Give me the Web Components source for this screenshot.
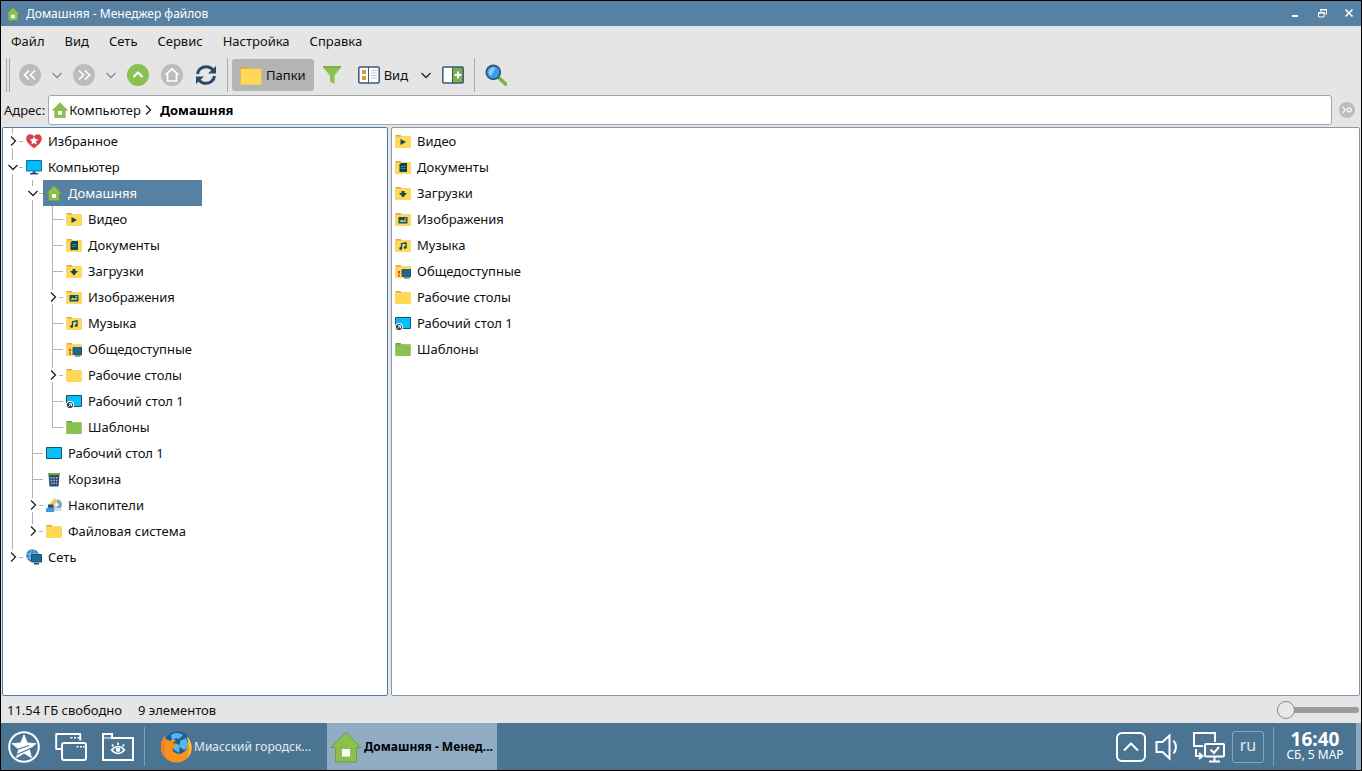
<!DOCTYPE html>
<html lang="ru">
<head>
<meta charset="utf-8">
<title>Домашняя - Менеджер файлов</title>
<style>
  html, body { margin: 0; height: 100%; background: #000; }
  body { font: 13px/20px "Noto Sans", "Open Sans", sans-serif; color: #101010; }
</style>
</head>
<body>
<desk-shell>
  <fm-titlebar icon="house">Домашняя - Менеджер файлов</fm-titlebar>
  <fm-menubar></fm-menubar>
  <fm-toolbar></fm-toolbar>
  <fm-address></fm-address>
  <fm-panes>
    <fm-tree slot="tree">
      <tree-item icon="heart" label="Избранное" state="closed"></tree-item>
      <tree-item icon="monitor" label="Компьютер" state="open">
        <tree-item icon="house" label="Домашняя" state="open" selected>
          <tree-item icon="f-video" label="Видео"></tree-item>
          <tree-item icon="f-docs" label="Документы"></tree-item>
          <tree-item icon="f-down" label="Загрузки"></tree-item>
          <tree-item icon="f-pics" label="Изображения" state="closed"></tree-item>
          <tree-item icon="f-music" label="Музыка"></tree-item>
          <tree-item icon="f-public" label="Общедоступные"></tree-item>
          <tree-item icon="folder" label="Рабочие столы" state="closed"></tree-item>
          <tree-item icon="desk-link" label="Рабочий стол 1"></tree-item>
          <tree-item icon="folder-green" label="Шаблоны"></tree-item>
        </tree-item>
        <tree-item icon="desk" label="Рабочий стол 1"></tree-item>
        <tree-item icon="trash" label="Корзина"></tree-item>
        <tree-item icon="drives" label="Накопители" state="closed"></tree-item>
        <tree-item icon="folder" label="Файловая система" state="closed"></tree-item>
      </tree-item>
      <tree-item icon="network" label="Сеть" state="closed"></tree-item>
    </fm-tree>
    <file-list slot="files">
      <file-entry icon="f-video">Видео</file-entry>
      <file-entry icon="f-docs">Документы</file-entry>
      <file-entry icon="f-down">Загрузки</file-entry>
      <file-entry icon="f-pics">Изображения</file-entry>
      <file-entry icon="f-music">Музыка</file-entry>
      <file-entry icon="f-public">Общедоступные</file-entry>
      <file-entry icon="folder">Рабочие столы</file-entry>
      <file-entry icon="desk-link">Рабочий стол 1</file-entry>
      <file-entry icon="folder-green">Шаблоны</file-entry>
    </file-list>
  </fm-panes>
  <fm-status><span>11.54 ГБ свободно</span><span>9 элементов</span></fm-status>
  <desk-taskbar slot="taskbar">
    <task-button icon="firefox">Миасский городск...</task-button>
    <task-button icon="house" active>Домашняя - Менед...</task-button>
  </desk-taskbar>
</desk-shell>

<script>
const FOLDER = '<path d="M0.5 2h5l1 1.500h9v11H0.500z" fill="#d9a93c"/><path d="M0.500 3.500h15V15H0.500z" fill="#ffd953"/>';
const HOUSE = '<path d="M16 1.500 1 16.500h4.500V31h21V16.500H31z" fill="#8bc04c" stroke="#6d9f3c"/><rect x="12" y="18" width="8" height="7.500" fill="#fff"/>';
const GREY = '<circle cx="11" cy="11" r="11" fill="#bcbcbc"/>';

/* name: [viewBox size, markup] */
const ICONS = {
  house: ['32 32', HOUSE],
  heart: ['16 16', '<path d="M8 15.200C4 12.500.2 9.500.2 5.500.2 2.800 2 1.200 4.200 1.200c1.600 0 3 .8 3.800 2 .8-1.200 2.200-2 3.800-2 2.200 0 4 1.600 4 4.300 0 4-3.800 7-7.800 9.700z" fill="#d9414f"/><path d="m8 3.500 1.300 2.600 2.900.4-2.100 2 .5 2.900L8 10l-2.600 1.400.5-2.900-2.100-2 2.900-.4z" fill="#fff"/>'],
  monitor: ['16 16', '<path d="M.5 1.500h15v10.500H.500z" fill="#00bfff" stroke="#166a94"/><path d="M6.500 12.500h3v2h-3z" fill="#1b5478"/><path d="M4 14h8v1.500H4z" fill="#1b5478"/>'],
  folder: ['16 16', FOLDER],
  'folder-green': ['16 16', '<path d="M.5 2h5l1 1.500h9v11H.5z" fill="#6d9f3c"/><path d="M.5 3.500h15V15H.5z" fill="#8bc152"/>'],
  'f-video': ['16 16', FOLDER + '<path d="M5.500 6v6l5.500-3z" fill="#0e4a50"/>'],
  'f-docs': ['16 16', FOLDER + '<path d="M6 4h6v9H4.500V5.500z" fill="#0e4453"/><path d="M6 7.500h4.500M6 9.500h4.500" stroke="#4f98ad" stroke-width=".8"/>'],
  'f-down': ['16 16', FOLDER + '<path d="M6.500 6h3v2H12l-4 4.500L4 8h2.500z" fill="#0e4a50"/>'],
  'f-pics': ['16 16', FOLDER + '<path d="M3.500 6h9v6.500h-9z" fill="#0e5560"/><path d="m4.500 11 2.200-2.500L8.200 10l1.700-1.500 1.700 2z" fill="#e8dc7a"/><circle cx="10.500" cy="7.500" r=".8" fill="#e8dc7a"/>'],
  'f-music': ['16 16', FOLDER + '<path d="M6.500 11.500V6.800l4.500-1v4.700" fill="none" stroke="#0e4a50" stroke-width="1.300"/><circle cx="5.700" cy="11.500" r="1.400" fill="#0e4a50"/><circle cx="10.200" cy="10.600" r="1.400" fill="#0e4a50"/>'],
  'f-public': ['16 16', FOLDER + '<circle cx="4" cy="9" r="1.200" fill="#d0442c"/><path d="M3 10.500h2V14H3z" fill="#e2782b"/><path d="M7 6.500h9v7H7z" fill="#1b6791" stroke="#164d70" stroke-width=".8"/><path d="M9 14.500h5.500v1H9z" fill="#234a60"/>'],
  desk: ['16 16', '<path d="M.5 2.500h15v11H.5z" fill="#00c2ff" stroke="#1d526f"/><path d="M3 4.500v3M5 4v1" stroke="#7f9c52" stroke-width="1.200"/>'],
  'desk-link': ['16 16', '<path d="M.5 2.500h15v11H.5z" fill="#00c2ff" stroke="#1d526f"/><path d="M3 4.500v1.500M5 4v1" stroke="#4f8a8c"/><circle cx="4" cy="12" r="4" fill="#fff"/><circle cx="4" cy="12" r="3.100" fill="#344550"/><path d="M2.500 13.700 5.200 11M3 10.700h2.500v2.500" stroke="#fff" fill="none"/>'],
  trash: ['16 16', '<path d="M2.500 3.500h11l-1 12h-9z" fill="#2f4d68"/><path d="M2 2h12v2H2z" fill="#7fa549"/><path d="M4.500 6h1.500v1.500H4.500zM7.300 6h1.500v1.500H7.300zM10 6h1.500v1.500H10zM4.700 8.700h1.500v1.500H4.700zM7.300 8.700h1.500v1.500H7.300zM9.900 8.700h1.500v1.500H9.900zM5 11.400h1.200v1.500H5zM7.300 11.400h1.500v1.500H7.300zM9.800 11.400H11v1.500H9.800z" fill="#a9c0d2"/>'],
  drives: ['16 16', '<circle cx="11" cy="7.500" r="5" fill="#c9dbe8"/><path d="M11 2.500a5 5 0 0 1 0 10z" fill="#79a9cf"/><circle cx="11" cy="7.500" r="1.500" fill="#fff"/><path d="M3 8 9 .5l1.500 4.500L5 10z" fill="#f3c93d"/><path d="M2 7.500h5.500v4H2z" fill="#2d4d57"/><path d="M0 12l1.500-1.500H9L8 15H0z" fill="#4096d8"/><path d="M8.500 11h6l1 1.500V14H9z" fill="#cfe0ee"/>'],
  network: ['16 16', '<circle cx="6.500" cy="6.500" r="6.300" fill="#2f86bb"/><path d="M6.500.2c-3.500 3-3.500 9 0 12.600 3.500-3.600 3.500-9.600 0-12.600zM.5 5h12M1 9h11" stroke="#a8dcf4" stroke-width=".8" fill="none"/><path d="M5.500 5.500h10v7.500h-10z" fill="#15719b" stroke="#164d70"/><path d="M8 14h5v1.500H8z" fill="#26465a"/>'],
  back: ['22 22', GREY + '<path d="m10 6.500-4.500 4.500 4.500 4.500m6-9L11.500 11l4.500 4.500" fill="none" stroke="#fff" stroke-width="1.700"/>'],
  forward: ['22 22', GREY + '<path d="m6 6.500 4.500 4.500L6 15.500m6-9 4.500 4.500-4.500 4.500" fill="none" stroke="#fff" stroke-width="1.700"/>'],
  up: ['22 22', '<circle cx="11" cy="11" r="11" fill="#8bc152"/><path d="m6.500 13 4.500-4.500 4.500 4.500" fill="none" stroke="#fff" stroke-width="2"/>'],
  home: ['22 22', GREY + '<path d="M4.500 10.800 11 4.800l6.500 6M6.500 9.500v7.500h9V9.500" fill="none" stroke="#fff" stroke-width="1.600"/>'],
  refresh: ['22 22', '<g fill="none" stroke="#2c4a68" stroke-width="3"><path d="M2.500 10C3 5.500 7 2.700 11 2.700c3 0 5.500 1.300 7 3.500"/><path d="M19.500 12c-.5 4.500-4.500 7.300-8.500 7.300-3 0-5.500-1.300-7-3.500"/></g><path d="M21 2v7.500h-8zM1 20v-7.500h8z" fill="#2c4a68"/>'],
  chevron: ['12 12', '<path d="m1.500 4 4.500 4.500L10.500 4" fill="none" stroke="currentColor" stroke-width="1.300"/>'],
  'chevron-right': ['12 12', '<path d="M4 1.500 8.500 6 4 10.500" fill="none" stroke="currentColor" stroke-width="1.300"/>'],
  filter: ['22 22', '<path d="M2 2h18v1.500l-6.500 8V20L9 17.500v-6L2 3.500z" fill="#8bc152"/><path d="M2 2h18v1.500H2z" fill="#77a944"/>'],
  view: ['22 22', '<rect x=".8" y="3" width="20.400" height="16" rx="1.500" fill="#fff" stroke="#3a5879" stroke-width="1.500"/><path d="M10.500 3v16" stroke="#3a5879"/><path d="M4 6h4v4H4zM4 12h4v4H4z" fill="#d39b3a"/><path d="M13 6.500h6M13 9h6M13 11.500h6M13 14h6" stroke="#c3ccd4"/>'],
  split: ['22 22', '<rect x=".8" y="3" width="20.400" height="16" rx="1" fill="#fff"/><path d="M11 3h10v16H11z" fill="#79b04a"/><path d="M10.500 3v16" stroke="#3a5879"/><path d="M16 7.500v7M12.500 11h7" stroke="#fff" stroke-width="2"/><rect x=".8" y="3" width="20.400" height="16" rx="1" fill="none" stroke="#3a5879" stroke-width="1.500"/>'],
  search: ['22 22', '<path d="m13.500 13.500 7 6.500" stroke="#7cb045" stroke-width="3.600" stroke-linecap="round"/><circle cx="8.300" cy="8.300" r="7" fill="#3c9bea" stroke="#315371" stroke-width="1.700"/><path d="M3.500 8.500a5 5 0 0 1 7-4.500L6 12a5 5 0 0 1-2.500-3.500z" fill="#8dcbfa"/>'],
  go: ['16 16', '<circle cx="8" cy="8" r="8" fill="#bcbcbc"/><path d="m3.500 5 3 3-3 3" fill="none" stroke="#f4f4f4" stroke-width="1.500"/><rect x="8.500" y="6.200" width="3.600" height="3.600" rx="1" fill="none" stroke="#f4f4f4" stroke-width="1.400"/>'],
  min: ['12 12', '<path d="M3 7h6v2H3z" fill="#fff"/>'],
  restore: ['12 12', '<path d="M4.500 3.500V1.500h6v4.500H8.500" fill="none" stroke="#fff"/><path d="M4 1h7v1.500H4z" fill="#fff"/><path d="M2.500 4.500h5.500v4.500H2.500z" fill="none" stroke="#fff"/><path d="M2 4h6.500v1.500H2z" fill="#fff"/>'],
  close: ['12 12', '<path d="m2.500 1.500 7 7m0-7-7 7" stroke="#fff" stroke-width="1.600"/>'],
  star: ['32 32', '<circle cx="16" cy="16" r="14.800" fill="none" stroke="#fff" stroke-width="2"/><path d="m16 4 3.200 8 8.700.6-6.700 5.600 2.100 8.400L16 22l-7.300 4.600 2.100-8.400-6.700-5.600 8.700-.6z" fill="#fff" stroke="#fff" stroke-linejoin="round"/><path d="M9.500 18.500 21 14.500M9 23.500 23.500 17" stroke="#4b7392" stroke-width="1.300"/>'],
  windows: ['32 32', '<g fill="none" stroke="#fff" stroke-width="2" stroke-linejoin="round"><path d="M7 18H1.200V3h24v6.500"/><rect x="7" y="12" width="24" height="17" rx="2"/></g><path d="M15.500 6h2v1.500h-2zm3.500 0h2v1.500h-2zm3.500 0h1.800v1.500h-1.800zM21.500 15h2v1.500h-2zm3.500 0h2v1.500h-2zm3 0h1.500v1.500H28z" fill="#fff"/>'],
  eye: ['32 32', '<path d="M1 29V3h9v4h21v22z" fill="none" stroke="#fff" stroke-width="2"/><path d="M1 7h9" stroke="#fff"/><path d="M9.500 19q6.500-7 13 0-6.500 7-13 0z" fill="none" stroke="#fff" stroke-width="1.600"/><circle cx="16" cy="18.800" r="2.300" fill="#fff"/><path d="m10 13.500 1.500 2M16 11.500v2.500m6-.5-1.500 2" stroke="#fff" stroke-width="1.600"/>'],
  firefox: ['32 32', '<circle cx="17.500" cy="14" r="13.500" fill="#1f5c94"/><path d="M11 4c4-3 9-2.500 12 0l-4 4-3-1-4 3zM20 10l6-3 3 8-5 4-4-3zM14 12l6 2-1 8-6-4z" fill="#57b5ee"/><path d="M4.500 5C1.500 9 .5 13.500 1 17.500 2 26 8.500 31.500 16.500 31.500 25 31.500 31.500 25 31.500 17c0-5-1.500-8.500-4.500-11.500 1.500 4 1.500 8.500-.5 12.500-2.500 5-9 6-12.500 3-1.500-1.200-2-3-1.500-4.500 1.200 1 3 .8 4.500-1l-1-1.500-3-1c.5-2 2-3 3-4-2-.5-4-.2-5.500.8C8.500 9 5.500 9.500 4.500 5z" fill="#f7941d"/><path d="M27 5.500C30 8.500 31.500 12 31.500 17c0 4-1.500 7.500-4 10 1.500-4 2.500-8 1.500-13z" fill="#fbc93d"/><path d="M4.500 5C1.500 9 .5 13.500 1 17.500c.7 5.500 4 10 8.500 12.300C5 24 4 16 6 9.500z" fill="#f08326"/>'],
  tray: ['30 30', '<rect x="1" y="1" width="28" height="28" rx="5" fill="none" stroke="#fff" stroke-width="2"/><path d="m8 18.500 7-7 7 7" fill="none" stroke="#fff" stroke-width="2"/>'],
  sound: ['28 28', '<path d="M2.500 9h6l7-6.500v23L8.500 19h-6z" fill="none" stroke="#fff" stroke-width="2"/><path d="M19.500 7.500q5 6.500 0 13" fill="none" stroke="#fff" stroke-width="2"/>'],
  lan: ['32 32', '<g fill="none" stroke="#fff" stroke-width="2"><path d="M10 15H1V2h21v9"/><rect x="12" y="13" width="19" height="12.500" rx="1"/><path d="M21.500 26v4M16 30.500h11M3 18v7h6M6 22l3.500 3L6 28M17.500 18.500l3.500 3.500 5-6"/></g>'],
};

/* Registers an element whose shadow root is cloned from one template. */
function define(tag, css, html, setup) {
  const tpl = document.createElement('template');
  tpl.innerHTML = `<style>*{box-sizing:border-box}
    button{font:inherit;color:inherit;background:none;border:0;padding:0;margin:0;display:flex;align-items:center;justify-content:center;white-space:nowrap}
    a{color:inherit;text-decoration:none}${css}</style>${html}`;
  customElements.define(tag, class extends HTMLElement {
    connectedCallback() {
      if (this.shadowRoot) return;
      this.attachShadow({ mode: 'open' }).append(tpl.content.cloneNode(true));
      if (setup) setup(this, this.shadowRoot);
    }
  });
}

const icon = (name, size) => `<ui-icon name="${name}" size="${size}"></ui-icon>`;

define('ui-icon', `:host{display:block;flex:none;width:var(--size,16px);height:var(--size,16px)}svg{display:block;width:100%;height:100%}`, '',
  (el, root) => {
    const [box, art] = ICONS[el.getAttribute('name')];
    el.style.setProperty('--size', el.getAttribute('size') + 'px');
    root.innerHTML += `<svg viewBox="0 0 ${box}" aria-hidden="true">${art}</svg>`;
  });

define('desk-shell', `
  :host{display:flex;flex-direction:column;min-height:100vh;padding:1px;box-sizing:border-box;background:#000}
  main{flex:1;display:flex;flex-direction:column;background:#e5e5e5;min-height:0}`,
  `<main><slot></slot></main><slot name="taskbar"></slot>`);

define('fm-titlebar', `
  :host{display:flex;align-items:center;height:25px;background:#5681a3;color:#fff;padding:0 2px 0 5px;gap:6px;box-sizing:border-box}
  h1{flex:1;margin:0;font-size:12px;font-weight:400}
  div{display:flex;gap:6px}button{width:21px;height:20px}`,
  `${icon('house', 14)}<h1><slot></slot></h1>
   <div><button aria-label="Свернуть">${icon('min', 12)}</button>
   <button aria-label="Восстановить">${icon('restore', 12)}</button>
   <button aria-label="Закрыть">${icon('close', 12)}</button></div>`);

define('fm-menubar', `
  :host{display:block}nav{display:flex;height:31px;align-items:center;padding-bottom:2px}button{padding:0 10px;height:24px}`,
  `<nav>${['Файл', 'Вид', 'Сеть', 'Сервис', 'Настройка', 'Справка'].map(t => `<button>${t}</button>`).join('')}</nav>`);

define('fm-toolbar', `
  :host{display:flex;align-items:center;height:36px;padding-left:5px}
  button{width:34px;height:32px;flex:none;border-radius:3px;gap:4px}
  .drop{width:20px;color:#222}.dim{color:#8c8c8c}.wide{width:36px}
  .text{width:auto;padding:0 8px}.on{background:#b4b4b4}
  .grip{width:4px;height:34px;border:solid #a8a8a8;border-width:0 1px;margin-right:3px}
  .sep{width:1px;height:34px;background:#aaa;margin:0 4px}`,
  `<span class="grip"></span>
   <button aria-label="Назад">${icon('back', 22)}</button>
   <button class="drop dim" aria-label="История назад">${icon('chevron', 12)}</button>
   <button aria-label="Вперёд">${icon('forward', 22)}</button>
   <button class="drop dim" aria-label="История вперёд">${icon('chevron', 12)}</button>
   <button aria-label="Вверх">${icon('up', 22)}</button>
   <button aria-label="Домой">${icon('home', 22)}</button>
   <button aria-label="Обновить">${icon('refresh', 22)}</button>
   <span class="sep"></span>
   <button class="text on" aria-pressed="true">${icon('folder', 22)}Папки</button>
   <button class="wide" aria-label="Фильтр">${icon('filter', 22)}</button>
   <button class="text">${icon('view', 22)}Вид</button>
   <button class="drop" aria-label="Режимы вида">${icon('chevron', 12)}</button>
   <button aria-label="Разделить">${icon('split', 22)}</button>
   <span class="sep"></span>
   <button aria-label="Поиск">${icon('search', 22)}</button>`);

define('fm-address', `
  :host{display:flex;align-items:center;height:34px;padding:0 6px 0 3px;gap:3px}
  nav{flex:1;display:flex;align-items:center;height:30px;background:#fff;border:1px solid #a2a7ab;border-radius:3px;padding:0 3px;gap:1px}
  ui-icon{color:#222}b{margin-left:5px;color:#000}.go{margin-left:4px}`,
  `<span id="l">Адрес:</span>
   <nav aria-labelledby="l">${icon('house', 16)}<button>Компьютер</button>
   ${icon('chevron-right', 12)}<b><button>Домашняя</button></b></nav>
   <button class="go" aria-label="Перейти">${icon('go', 16)}</button>`);

define('fm-panes', `
  :host{flex:1;display:flex;gap:3px;padding:0 1px;min-height:0}
  section{background:#fff;border:1px solid #8398b1;border-radius:2px}
  .tree{flex:0 0 386px;border-color:#557c9f}.files{flex:1;min-width:0}`,
  `<section class="tree"><slot name="tree"></slot></section><section class="files"><slot name="files"></slot></section>`);

define('fm-tree', `:host{display:block}`, `<slot></slot>`, el => el.setAttribute('role', 'tree'));

define('tree-item', `
  :host{display:grid;grid-template-columns:20px 1fr;--line:#b5b2b4}
  .guide{background:linear-gradient(var(--line),var(--line)) 9px 0/1px 100% no-repeat}
  :host(:last-child) .guide{background-size:1px 13px}
  .twig{display:flex;align-items:center;height:26px;color:#222}
  .twig::after{content:"";flex:1;height:1px;background:var(--line);margin-left:9px}
  .twig.fold::after{margin:0}
  .fold button{width:12px;height:14px;margin-left:4px;background:#fff}
  .row{height:26px;padding:0 3px;gap:6px;justify-content:flex-start}
  :host([selected]) .row{background:#5681a3;color:#fff;width:159px}`,
  `<div class="guide"><div class="twig"></div></div><div><button class="row"></button><slot></slot></div>`,
  (el, root) => {
    el.setAttribute('role', 'treeitem');
    const state = el.getAttribute('state'), twig = root.querySelector('.twig');
    if (state) {
      const open = state === 'open';
      twig.classList.add('fold');
      twig.innerHTML = `<button aria-label="${open ? 'Свернуть' : 'Развернуть'}">${icon(open ? 'chevron' : 'chevron-right', 12)}</button>`;
    }
    root.querySelector('.row').innerHTML = `${icon(el.getAttribute('icon'), 16)}<span>${el.getAttribute('label')}</span>`;
  });

define('file-list', `:host{display:flex;flex-direction:column;align-items:flex-start;padding-left:3px}`, `<slot></slot>`,
  el => el.setAttribute('role', 'list'));
define('file-entry', `:host{display:block}a{display:flex;align-items:center;gap:6px;height:26px}`,
  `<a href="#"><slot></slot></a>`,
  (el, root) => {
    el.setAttribute('role', 'listitem');
    root.querySelector('a').insertAdjacentHTML('afterbegin', icon(el.getAttribute('icon'), 16));
  });

define('fm-status', `
  :host{display:flex;align-items:center;height:27px;padding:0 2px 0 6px}
  p{flex:1;display:flex;gap:16px;margin:0}
  input{appearance:none;width:82px;height:20px;margin:0;background:none}
  input::-webkit-slider-runnable-track{height:6px;border-radius:3px;background:linear-gradient(90deg,transparent 10px,#9b9b9b 10px)}
  input::-webkit-slider-thumb{appearance:none;width:18px;height:18px;margin-top:-6px;border:1px solid #8a8a8a;border-radius:50%;background:#e8e8e8}`,
  `<p><slot></slot></p><input type="range" min="0" max="10" value="0" aria-label="Размер значков">`);

define('desk-taskbar', `
  :host{display:flex;align-items:stretch;height:47px;background:#4b7392;color:#fff}
  .launch{width:47px;justify-content:flex-start;padding-left:7px}
  .sep{width:1px;background:#7d9fb9;margin:4px 0}
  .first{margin:4px 12px 4px 2px}
  .tray{margin-left:auto;display:flex;align-items:center;gap:4px;padding-right:9px}
  .tray button{height:32px;width:38px}.tray .up{width:30px}.tray .snd{width:36px}
  .tray .lang{width:32px;border:1px solid #86a8c1;border-radius:3px;font-size:16px;color:#dfe8ee;padding-bottom:4px}
  .clock{width:82px;padding-bottom:2px}
  time{display:flex;flex-direction:column;align-items:center}
  time b{font-size:19px;line-height:18px}time span{font-size:12px;line-height:14px}
  .edge{width:5px;background:#8aa9c0}`,
  `<button class="launch" aria-label="Пуск">${icon('star', 32)}</button>
   <button class="launch" aria-label="Окна">${icon('windows', 32)}</button>
   <button class="launch" aria-label="Просмотр файлов">${icon('eye', 32)}</button>
   <span class="sep first"></span><slot></slot>
   <div class="tray">
     <button class="up" aria-label="Показать значки">${icon('tray', 30)}</button>
     <button class="snd" aria-label="Громкость">${icon('sound', 28)}</button>
     <button aria-label="Сеть">${icon('lan', 32)}</button>
     <button class="lang">ru</button>
   </div>
   <span class="sep"></span>
   <button class="clock"><time><b>16:40</b><span>СБ, 5 МАР</span></time></button>
   <button class="edge" aria-label="Показать рабочий стол"></button>`);

define('task-button', `
  :host{display:flex;width:170px}
  button{flex:1;justify-content:flex-start;padding:0 3px;gap:2px;color:#e6edf2;font-size:12px}
  :host([active]) button{background:#8facc4;color:#000;font-weight:700}`,
  `<button><slot></slot></button>`,
  (el, root) => root.querySelector('button').insertAdjacentHTML('afterbegin', icon(el.getAttribute('icon'), 32)));
</script>
</body>
</html>
